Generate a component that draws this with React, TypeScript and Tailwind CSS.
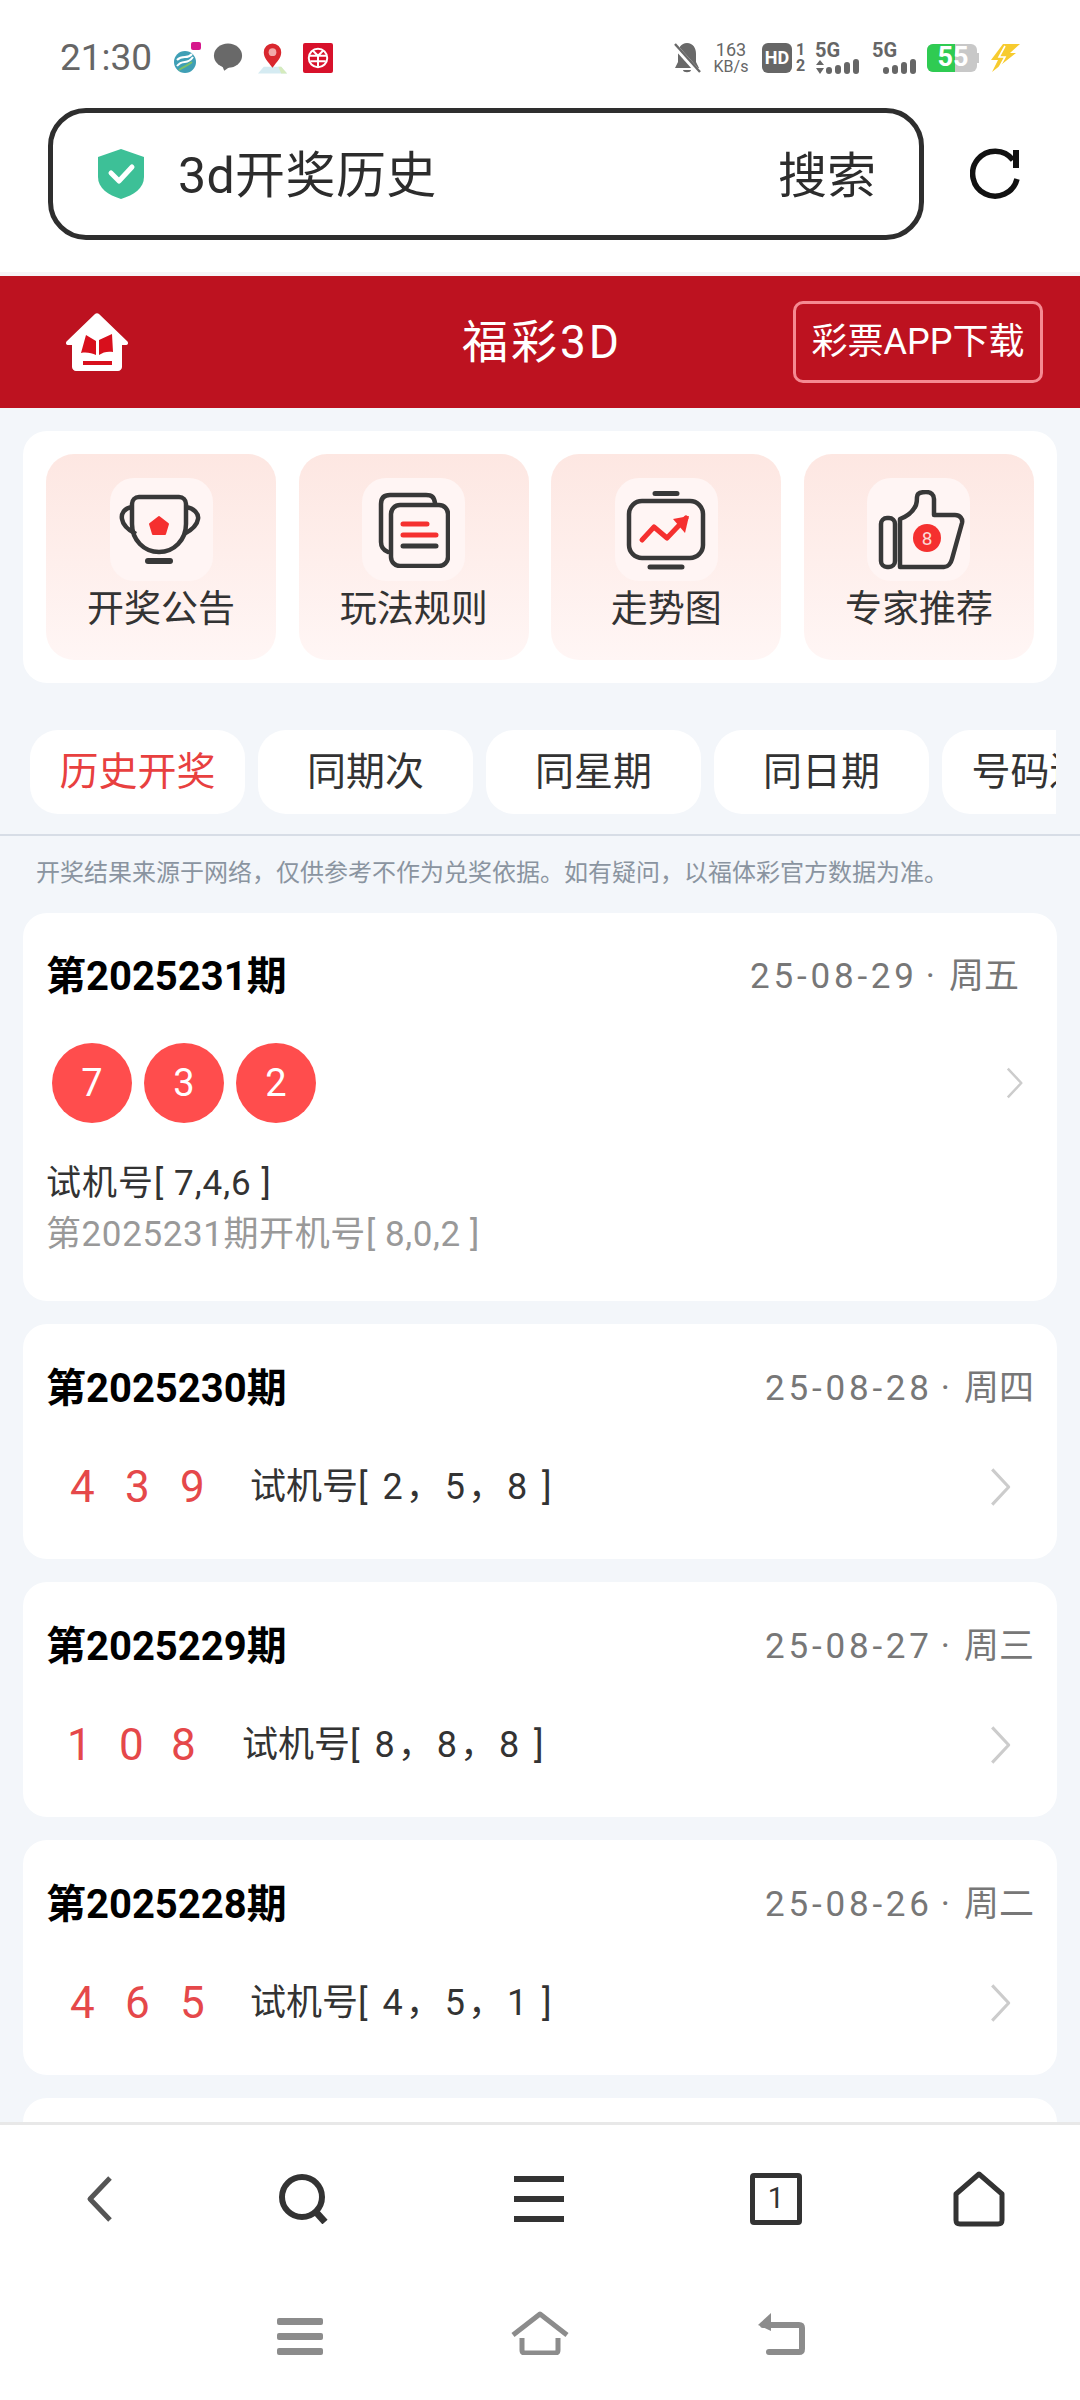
import type { ReactNode } from "react";

const FONT = "font-['Roboto','Noto_Sans_CJK_SC',sans-serif]";

const entries = [
  {
    id: "第2025230期",
    date: "25-08-28",
    week: "周四",
    nums: ["4", "3", "9"],
    trial: ["2", "5", "8"],
    narrow: false,
  },
  {
    id: "第2025229期",
    date: "25-08-27",
    week: "周三",
    nums: ["1", "0", "8"],
    trial: ["8", "8", "8"],
    narrow: true,
  },
  {
    id: "第2025228期",
    date: "25-08-26",
    week: "周二",
    nums: ["4", "6", "5"],
    trial: ["4", "5", "1"],
    narrow: false,
  },
];

function Chevron({ className }: { className: string }) {
  return (
    <svg viewBox="0 0 20 36" fill="none" className={className}>
      <path d="M2 2l15 16L2 34" stroke="#cccccc" strokeWidth="2.8" strokeLinejoin="round" />
    </svg>
  );
}

function StatusLeft() {
  return (
    <div className="flex items-center">
      <span className="w-[92px] text-[37px] leading-none whitespace-nowrap text-[#666]">21:30</span>
      <svg viewBox="0 0 30 34" className="ml-[21px] h-[34px] w-[30px]">
        <circle cx="12" cy="21" r="11" fill="#3f9fb5" />
        <path d="M4 25c6-8 10 0 16-9M4 19c6-6 10 0 15-6" stroke="#fff" strokeWidth="2" fill="none" />
        <path d="M6 29c6-4 8-4 13-8" stroke="#7bc06a" strokeWidth="2" fill="none" />
        <rect x="18" y="1" width="10" height="8" rx="2" fill="#d6188c" />
      </svg>
      <svg viewBox="0 0 32 30" className="ml-[10px] h-[29px] w-[30px]">
        <ellipse cx="16" cy="13" rx="15" ry="13" fill="#696969" />
        <path d="M9 22l3 7 7-5z" fill="#696969" />
      </svg>
      <svg viewBox="0 0 32 34" className="ml-[14px] h-[34px] w-[31px]">
        <path d="M1 33l6-7h18l6 7z" fill="#d5ebf2" />
        <path d="M22 26h3l6 7h-6z" fill="#d5ebbd" />
        <path d="M16 27C11 20 7 17 7 11a9 9 0 0118 0c0 6-4 9-9 16z" fill="#d9272e" />
        <circle cx="16" cy="11" r="4" fill="#f2a9a9" />
      </svg>
      <div className="ml-[15px] flex h-[30px] w-[30px] items-center justify-center rounded-[2px] bg-[#d8112b]">
        <svg viewBox="0 0 20 20" className="h-[22px] w-[22px]" fill="none" stroke="#fff" strokeWidth="1.8">
          <circle cx="10" cy="10" r="8.4" />
          <path d="M2 8h16M3 13h14M10 8v10M5 3l5 5 5-5" />
        </svg>
      </div>
    </div>
  );
}

function Bars({ arrows }: { arrows?: boolean }) {
  return (
    <div className="flex w-[46px] flex-col">
      <span className="text-[20px] leading-[16px] font-bold text-[#666]">5G</span>
      <svg viewBox="0 0 46 16" className="h-[16px] w-[46px]">
        {arrows && <path d="M1 7l4-5 4 5zM1 10h8l-4 6z" fill="#666" />}
        <rect x="11" y="9" width="6" height="7" rx="3" fill="#666" />
        <rect x="20" y="7" width="6" height="9" rx="3" fill="#666" />
        <rect x="29" y="4" width="6" height="12" rx="3" fill="#666" />
        <rect x="38" y="1" width="6" height="15" rx="3" fill="#666" />
      </svg>
    </div>
  );
}

function StatusRight() {
  return (
    <div className="flex items-center text-[#666]">
      <svg viewBox="0 0 28 34" className="h-[34px] w-[28px]">
        <path d="M14 2c6 0 9 5 9 11v8l3 6H2l3-6v-8C5 7 8 2 14 2zM10 29h8c0 3-8 3-8 0z" fill="#696969" />
        <path d="M1 4l25 28" stroke="#fff" strokeWidth="5" />
        <path d="M2 3l25 28" stroke="#696969" strokeWidth="2.4" />
      </svg>
      <div className="ml-[12px] flex w-[36px] flex-col items-center text-[18px] leading-[17px]">
        <span>163</span>
        <span className="text-[16px] whitespace-nowrap">KB/s</span>
      </div>
      <div className="ml-[13px] flex h-[30px] w-[30px] items-center justify-center rounded-[6px] bg-[#666] text-[18px] font-bold text-white">
        HD
      </div>
      <div className="ml-[4px] flex w-[9px] flex-col items-center text-[16px] leading-[16px] font-bold">
        <span>1</span>
        <span>2</span>
      </div>
      <div className="ml-[10px]">
        <Bars arrows />
      </div>
      <div className="ml-[11px]">
        <Bars />
      </div>
      <div className="relative ml-[9px] flex h-[28px] w-[52px] items-center">
        <div className="flex h-[28px] w-[50px] overflow-hidden rounded-[6px] bg-[#c8c8c8]">
          <div className="w-[28px] bg-[#2fcb52]" />
        </div>
        <div className="h-[10px] w-[2px] bg-[#c8c8c8]" />
        <span className="absolute inset-x-0 text-center text-[27px] leading-none font-bold text-white">55</span>
      </div>
      <svg viewBox="0 0 30 30" className="ml-[11px] h-[30px] w-[30px]">
        <path d="M13 1h17L20 10h6L2 29l6-12H1z" fill="#f7cb2e" />
        <path d="M15 3L9 14h6L9 25" stroke="#fff" strokeWidth="1.6" fill="none" />
      </svg>
    </div>
  );
}

function IconBox({ children }: { children: ReactNode }) {
  return (
    <div className="flex h-[103px] w-[103px] items-center justify-center rounded-[24px] bg-[#fff5f4]">
      {children}
    </div>
  );
}

function Tile({ label, icon }: { label: string; icon: ReactNode }) {
  return (
    <div className="flex h-[206px] w-[230px] flex-col items-center rounded-[28px] bg-gradient-to-b from-[#fde7e2] to-[#fff6f5] pt-[24px]">
      <IconBox>{icon}</IconBox>
      <span className="mt-[6px] text-[37px] leading-[46px] text-[#333]">{label}</span>
    </div>
  );
}

function Trophy() {
  return (
    <svg viewBox="0 0 84 76" fill="none" className="h-[76px] w-[84px]" stroke="#383838" strokeWidth="4.5">
      <path d="M13 12c0-4 3-7 7-7h40c4 0 7 3 7 7v20c0 16-12 28-27 28S13 48 13 32z" strokeLinejoin="round" />
      <path d="M13 15C5 16 2 22 3 27c1 7 8 12 14 15M67 15c8 1 13 7 12 12-1 7-8 12-14 15" />
      <path d="M29 69h22" strokeWidth="6" strokeLinecap="round" />
      <path d="M40 25l9 7-3 10H34l-3-10z" fill="#f5302f" stroke="#f5302f" strokeWidth="2" strokeLinejoin="round" />
    </svg>
  );
}

function Docs() {
  return (
    <svg viewBox="0 0 72 76" fill="none" className="h-[76px] w-[72px]" strokeLinecap="round">
      <path d="M10 60C5 58 3 55 3 50V12c0-6 3-9 9-9h36c6 0 8 2 9 8" stroke="#383838" strokeWidth="4.5" />
      <rect x="13" y="13" width="57" height="61" rx="9" stroke="#383838" strokeWidth="4.5" />
      <path d="M25 32h24M25 43h33" stroke="#f5302f" strokeWidth="5" />
      <path d="M25 54h33" stroke="#383838" strokeWidth="5" />
    </svg>
  );
}

function Trend() {
  return (
    <svg viewBox="0 0 80 80" fill="none" className="h-[80px] w-[80px]" strokeLinecap="round">
      <path d="M29 3.5h22M24 77h32" stroke="#383838" strokeWidth="5" />
      <rect x="3" y="11" width="74" height="57" rx="13" stroke="#383838" strokeWidth="4.5" />
      <path d="M16 50l12-13 13 11 19-20" stroke="#f5302f" strokeWidth="5" strokeLinejoin="round" />
      <path d="M47 29l16-3-4 17z" fill="#f5302f" />
    </svg>
  );
}

function Thumb() {
  return (
    <svg viewBox="0 0 92 80" fill="none" className="h-[80px] w-[92px]" stroke="#383838" strokeWidth="4.5" strokeLinejoin="round">
      <rect x="8" y="28" width="14" height="49" rx="6" />
      <path d="M27 77V29c8-3 13-7 16-14 1-3 1-5 1-8 0-4 4-5 9-5s8 3 8 7v16h21c5 0 8 4 7 8l-10 36c-1 4-4 8-8 8z" />
      <circle cx="54" cy="48" r="14" fill="#f5302f" stroke="none" />
      <text x="54" y="55" textAnchor="middle" fontSize="19" fill="#fcd9d5" stroke="none" fontFamily="Roboto">
        8
      </text>
    </svg>
  );
}

function DateLabel({ date, week }: { date: string; week: string }) {
  return (
    <span className="text-[35px] leading-[44px] text-[#777]">
      <span className="tracking-[3.8px]">{date}</span>
      <span className="mr-[14px] ml-[8px]">·</span>
      {week}
    </span>
  );
}

function LatestCard() {
  return (
    <section className="h-[388px] rounded-[24px] bg-white pt-[40px] pr-[33px] pl-[23px]">
      <div className="flex items-center justify-between pr-[5px]">
        <h2 className="text-[40px] leading-[48px] font-bold text-black">第2025231期</h2>
        <DateLabel date="25-08-29" week="周五" />
      </div>
      <div className="mt-[42px] flex items-center justify-between pl-[6px]">
        <div className="flex gap-[12px]">
          {["7", "3", "2"].map((n, i) => (
            <span
              key={i}
              className="flex h-[80px] w-[80px] items-center justify-center rounded-full bg-[#ff4d4d] text-[38px] text-white"
            >
              {n}
            </span>
          ))}
        </div>
        <Chevron className="h-[34px] w-[18px]" />
      </div>
      <p className="mt-[36px] text-[35px] leading-[50px] tracking-[1px] text-[#333]">试机号[ 7,4,6 ]</p>
      <p className="mt-[1px] text-[35px] leading-[50px] tracking-[0.6px] text-[#999]">第2025231期开机号[ 8,0,2 ]</p>
    </section>
  );
}

function HistoryCard({ id, date, week, nums, trial, narrow }: (typeof entries)[number]) {
  return (
    <section className="h-[235px] shrink-0 rounded-[24px] bg-white pt-[41px] pr-[23px] pl-[23px]">
      <div className="flex items-center justify-between">
        <h2 className="text-[40px] leading-[48px] font-bold text-black">{id}</h2>
        <DateLabel date={date} week={week} />
      </div>
      <div className="mt-[49px] flex items-center justify-between pr-[22px]">
        <div className={`flex items-center ${narrow ? "pl-[21px]" : "pl-[24px]"}`}>
          <div
            className={`flex text-[44px] leading-[50px] text-[#e5484a] ${
              narrow ? "w-[175px] gap-[28px]" : "w-[180px] gap-[31px]"
            }`}
          >
            {nums.map((n, i) => (
              <span key={i} className="w-[24px] text-center">
                {n}
              </span>
            ))}
          </div>
          <span className="text-[36px] leading-[50px] whitespace-pre text-[#333]">
            试机号
            <span className="tracking-[3px]">{`[ ${trial[0]}，${trial[1]}，${trial[2]} ]`}</span>
          </span>
        </div>
        <Chevron className="h-[40px] w-[22px]" />
      </div>
    </section>
  );
}

export default function App() {
  return (
    <div className={`flex h-[2400px] w-[1080px] flex-col overflow-hidden bg-[#f3f6fa] ${FONT}`}>
      <header className="h-[272px] shrink-0 bg-white">
        <div className="flex h-[108px] items-center justify-between pt-[7px] pr-[60px] pl-[60px]">
          <StatusLeft />
          <StatusRight />
        </div>
        <div className="flex items-center pl-[48px]">
          <div className="flex h-[132px] w-[876px] items-center rounded-[38px] border-[5px] border-[#2e2e2e] pr-[43px] pl-[45px]">
            <svg viewBox="0 0 46 50" className="h-[50px] w-[46px]">
              <path d="M23 0l23 8v20c0 11-10 18-23 22C10 46 0 39 0 28V8z" fill="#3dc097" />
              <path d="M13 24l8 8 13-14" fill="none" stroke="#fff" strokeWidth="5" strokeLinecap="round" strokeLinejoin="round" />
            </svg>
            <span className="ml-[34px] flex-1 pt-[5px] text-[50px] tracking-[0.4px] text-[#2c2c2c]">3d开奖历史</span>
            <span className="pt-[5px] text-[49px] text-[#2c2c2c]">搜索</span>
          </div>
          <svg viewBox="0 0 50 52" fill="none" className="ml-[46px] h-[52px] w-[50px]">
            <path d="M43 12A22.500 22.500 0 1 0 47 31" stroke="#111" strokeWidth="5.500" />
            <rect x="43" y="2" width="6" height="18" fill="#111" />
          </svg>
        </div>
      </header>
      <div className="h-[4px] shrink-0 bg-[#f7f4f7]" />
      <div className="flex h-[132px] shrink-0 items-center bg-[#bd1220] pl-[66px]">
        <svg viewBox="0 0 62 58" className="h-[58px] w-[62px]">
          <path d="M29 1c1-1 3-1 4 0l28 27c2 2 1 4-2 4h-3v22c0 2-2 4-4 4H10c-2 0-4-2-4-4V32H3c-3 0-4-2-2-4z" fill="#fff" />
          <path d="M15 40l5-18 10 6v14c-4-2-10-3-15-2z" fill="#d80f1c" />
          <path d="M47 39l-1-18-13 6v15c4-3 9-4 14-3z" fill="#d80f1c" />
          <rect x="17" y="48" width="29" height="4" fill="#d80f1c" />
        </svg>
        <span className="ml-[334px] w-[157px] text-center text-[46px] tracking-[3px] whitespace-nowrap text-white">福彩3D</span>
        <div className="ml-[174px] flex h-[82px] w-[250px] items-center justify-center rounded-[10px] border-[3px] border-[#f58a92] text-[36px] whitespace-nowrap text-white">
          彩票APP下载
        </div>
      </div>
      <main className="min-h-0 flex-1 overflow-hidden">
        <div className="mx-[23px] mt-[23px] flex h-[252px] items-center justify-between rounded-[24px] bg-white px-[23px]">
          <Tile label="开奖公告" icon={<Trophy />} />
          <Tile label="玩法规则" icon={<Docs />} />
          <Tile label="走势图" icon={<Trend />} />
          <Tile label="专家推荐" icon={<Thumb />} />
        </div>
        <div className="mt-[47px] h-[106px] border-b-2 border-[#d7dde6]">
          <div className="mr-[24px] ml-[30px] flex gap-[13px] overflow-hidden">
            {["历史开奖", "同期次", "同星期", "同日期", "号码遗漏"].map((t, i) => (
              <div
                key={t}
                className={`flex h-[84px] w-[215px] shrink-0 items-center justify-center rounded-[28px] bg-white text-[39px] whitespace-nowrap ${
                  i === 0 ? "text-[#e8403f]" : "text-[#333]"
                }`}
              >
                {t}
              </div>
            ))}
          </div>
        </div>
        <p className="mt-[21px] pl-[36px] text-[24px] leading-[32px] text-[#8a94a0]">
          开奖结果来源于网络，仅供参考不作为兑奖依据。如有疑问，以福体彩官方数据为准。
        </p>
        <div className="mx-[23px] mt-[24px] flex flex-col gap-[23px]">
          <LatestCard />
          {entries.map((e) => (
            <HistoryCard key={e.id} {...e} />
          ))}
          <section className="h-[120px] shrink-0 rounded-[24px] bg-white" />
        </div>
      </main>
      <nav className="h-[278px] shrink-0 border-t-[3px] border-[#e8e8e8] bg-white">
        <div className="flex h-[135px] items-center pt-[12px] pl-[86px]">
          <svg viewBox="0 0 26 46" fill="none" className="h-[46px] w-[26px]">
            <path d="M24 2L4 23l20 21" stroke="#555" strokeWidth="5" strokeLinejoin="round" />
          </svg>
          <svg viewBox="0 0 50 50" fill="none" className="ml-[167px] h-[50px] w-[50px]">
            <circle cx="23" cy="23" r="20" stroke="#333" strokeWidth="6" />
            <path d="M36 37l10 11" stroke="#333" strokeWidth="7" />
          </svg>
          <div className="ml-[185px] flex w-[50px] flex-col gap-[14px]">
            <div className="h-[6px] bg-[#333]" />
            <div className="h-[6px] bg-[#333]" />
            <div className="h-[6px] bg-[#333]" />
          </div>
          <div className="ml-[186px] flex h-[52px] w-[52px] items-center justify-center rounded-[4px] border-[5px] border-[#333] text-[29px] leading-none text-[#333]">
            1
          </div>
          <svg viewBox="0 0 52 56" fill="none" className="ml-[151px] h-[56px] w-[52px]">
            <path d="M26 3l23 20v26c0 3-1 4-4 4H7c-3 0-4-1-4-4V23z" stroke="#333" strokeWidth="5" strokeLinejoin="round" />
          </svg>
        </div>
        <div className="flex items-end pt-[51px] pl-[277px]">
          <div className="flex w-[46px] flex-col gap-[8px]">
            <div className="h-[7px] rounded-[2px] bg-[#8c8c8c]" />
            <div className="h-[7px] rounded-[2px] bg-[#8c8c8c]" />
            <div className="h-[7px] rounded-[2px] bg-[#8c8c8c]" />
          </div>
          <svg viewBox="0 0 58 44" fill="none" className="ml-[188px] h-[44px] w-[58px]">
            <path d="M2 24L29 3l27 21" stroke="#8c8c8c" strokeWidth="5" strokeLinejoin="round" />
            <path d="M11 27v12c0 2 1 3 3 3h30c2 0 3-1 3-3V27" stroke="#8c8c8c" strokeWidth="5" />
          </svg>
          <svg viewBox="0 0 48 43" fill="none" className="ml-[188px] h-[43px] w-[48px]">
            <path d="M6 13h36c2 0 3 1 3 3v21c0 2-1 3-3 3H12" stroke="#8c8c8c" strokeWidth="6" strokeLinecap="round" />
            <path d="M14 1v18L1 13z" fill="#8c8c8c" />
          </svg>
        </div>
      </nav>
    </div>
  );
}
